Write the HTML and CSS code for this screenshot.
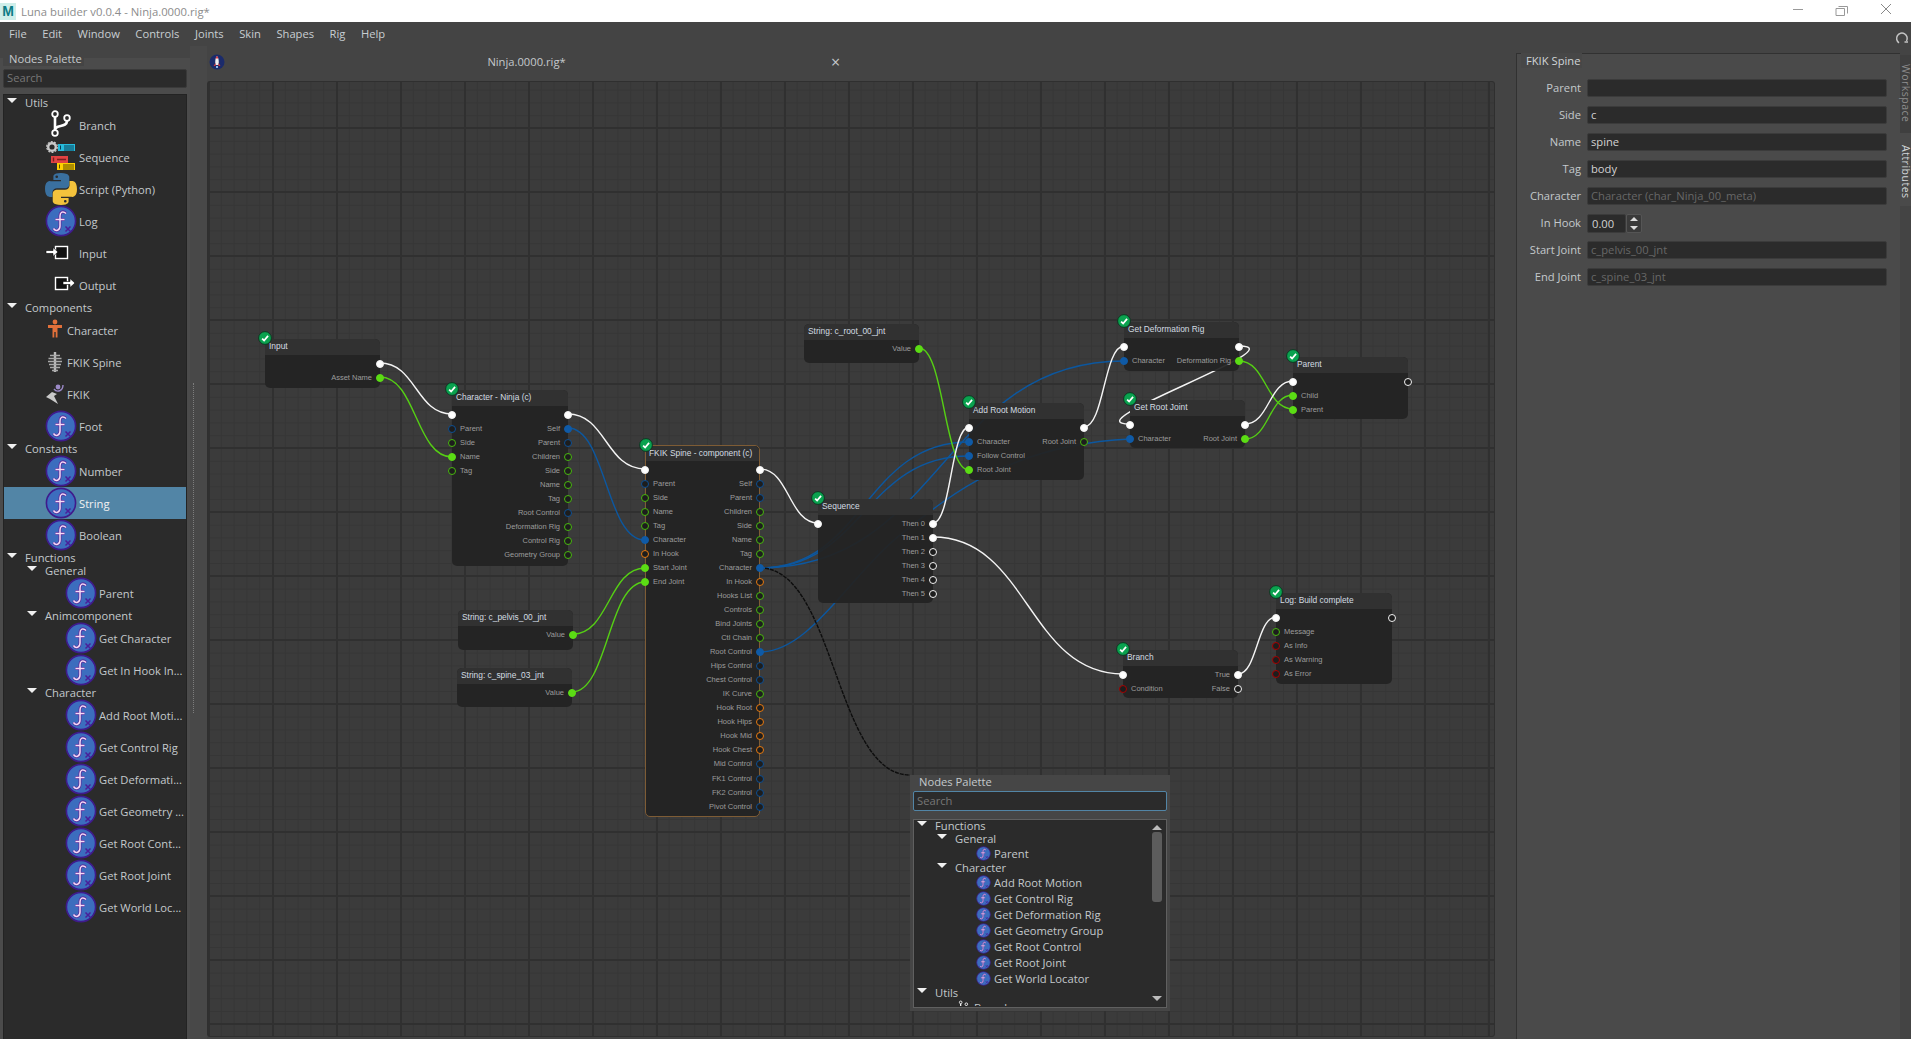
FILE: index.html
```html
<!DOCTYPE html>
<html>
<head>
    <title>Luna builder v0.0.4 - Ninja.0000.rig*</title>
    <meta charset="UTF-8">
    <link rel="stylesheet" href="styles.css">
</head>
<body>
<!-- icon sheet -->
<svg class="sheet" width="0" height="0">
    <symbol id="i-fn" viewBox="0 0 32 32">
        <circle cx="16" cy="16" r="14.6" fill="#3c6dbe" stroke="#3f1b8c" stroke-width="1.6"/>
        <path d="M21 8.5C18 5.5 15 7 15 11V21C15 26 10.500 26.500 8.500 23.500M10.500 14.500H19.500" fill="none" stroke="#5a2a9c" stroke-width="3"/>
        <path d="M21 8.500C18 5.500 15 7 15 11V21C15 26 10.500 26.500 8.500 23.500M10.500 14.500H19.500" fill="none" stroke="#f4dcf6" stroke-width="1.500"/>
        <path d="M20.500 21.500L25.500 26.500M25.500 21.500L20.500 26.500" stroke="#4a1f9a" stroke-width="1.500"/>
    </symbol>
    <symbol id="i-branch" viewBox="0 0 32 32">
        <g fill="none" stroke="#fff">
            <path d="M10 8V21M22 12C22 19 10 15 10 21" stroke-width="2.600"/>
            <circle cx="10" cy="5" r="2.800" stroke-width="1.800"/>
            <circle cx="22" cy="9" r="2.800" stroke-width="1.800"/>
            <circle cx="10" cy="24" r="2.800" stroke-width="1.800"/>
        </g>
    </symbol>
    <symbol id="i-seq" viewBox="0 0 32 32">
        <circle cx="7" cy="6" r="3.800" fill="none" stroke="#c9c9c9" stroke-width="2.400"/>
        <circle cx="7" cy="6" r="5.300" fill="none" stroke="#c9c9c9" stroke-width="1.200" stroke-dasharray="2 1.300"/>
        <rect x="13" y="3" width="17" height="7" fill="#26bcdc"/>
        <path d="M15.500 4.500V8.500M19 5H29M19 7H29M19 9H29" stroke="#0b3e57" stroke-width="1"/>
        <rect x="6" y="15" width="17" height="7" fill="#e14242"/>
        <path d="M8.500 16.500V20.500M12 18.500H21" stroke="#7c1f1f" stroke-width="1.400"/>
        <rect x="12" y="22" width="18" height="7" fill="#fed000"/>
        <path d="M14.500 23.500V27.500M18 24H29M18 26H29M18 28H29" stroke="#5a4a00" stroke-width="1"/>
    </symbol>
    <symbol id="i-python" viewBox="0 0 24 24">
        <path d="M11.900 0C6 0 6.300 2.600 6.300 2.600V5.300H12V6.100H4C4 6.100 0 5.600 0 11.900S3.500 18 3.500 18H5.600V15C5.600 15 5.500 11.500 9 11.500H15C15 11.500 18.200 11.500 18.200 8.400V3.200C18.200 3.200 18.700 0 11.900 0ZM8.800 1.800A1 1 0 1 1 8.800 3.800A1 1 0 1 1 8.800 1.800Z" fill="#3a709f" fill-rule="evenodd"/>
        <path d="M11.900 0C6 0 6.300 2.600 6.300 2.600V5.300H12V6.100H4C4 6.100 0 5.600 0 11.900S3.500 18 3.500 18H5.600V15C5.600 15 5.500 11.500 9 11.500H15C15 11.500 18.200 11.500 18.200 8.400V3.200C18.200 3.200 18.700 0 11.900 0ZM8.800 1.800A1 1 0 1 1 8.800 3.800A1 1 0 1 1 8.800 1.800Z" fill="#f3c23c" fill-rule="evenodd" transform="rotate(180 12 12)"/>
    </symbol>
    <symbol id="i-input" viewBox="0 0 32 32">
        <rect x="10.500" y="9.500" width="12" height="12" fill="#111" stroke="#fff" stroke-width="1.400"/>
        <path d="M1 13.500H8V10.500L13 15L8 19.500V16.500H1Z" fill="#fff" stroke="#000" stroke-width=".6"/>
    </symbol>
    <symbol id="i-output" viewBox="0 0 32 32">
        <rect x="10.500" y="8.500" width="12" height="12" fill="#111" stroke="#fff" stroke-width="1.400"/>
        <path d="M18 12.500H25V9.500L30 14L25 18.500V15.500H18Z" fill="#fff" stroke="#000" stroke-width=".6"/>
    </symbol>
    <symbol id="i-char" viewBox="0 0 20 32">
        <circle cx="10" cy="8" r="2.400" fill="#e2703a"/>
        <path d="M3 11H17V14H12.500V23.500H10.700V18H9.300V23.500H7.500V14H3Z" fill="#e2703a"/>
    </symbol>
    <symbol id="i-spine" viewBox="0 0 20 32">
        <path d="M10 6V26" stroke="#bdbdbd" stroke-width="2.400"/>
        <path d="M5 9.500H15M3.500 12.500H16.500M3 15.500H17M4 18.500H16M5 21.500H15M7 24.500H13" stroke="#a9a9a9" stroke-width="1.600"/>
    </symbol>
    <symbol id="i-fkik" viewBox="0 0 20 32">
        <path d="M1 19L7 14L12 16L9 18L13 26L5 21Z" fill="#c9c9c9"/>
        <circle cx="13" cy="9" r="2.400" fill="#9c8ac8"/>
        <path d="M9 11C12 15 18 13 18 7" fill="none" stroke="#9c8ac8" stroke-width="1.400"/>
    </symbol>
    <symbol id="i-check" viewBox="0 0 16 16">
        <circle cx="8" cy="8" r="7.300" fill="#0aa24f" stroke="#0b2f1d" stroke-width="1"/>
        <path d="M4.700 8.600L7 10.800L11.500 5.500" fill="none" stroke="#fff" stroke-width="2"/>
    </symbol>
</svg>

<div class="titlebar">
    <span class="app-logo">M</span>
    <span class="app-title">Luna builder v0.0.4 - Ninja.0000.rig*</span>
    <svg class="win-btns" width="111" height="22" viewBox="0 0 111 22">
        <path d="M0 9.500H10" stroke="#999" fill="none"/>
        <path d="M45.500 6.500H54.500V13.500M43 8.500H51.500V15.500H43Z" stroke="#999" fill="none"/>
        <path d="M88 4L98 14M98 4L88 14" stroke="#888" fill="none"/>
    </svg>
</div>

<div class="menubar">
    <span>File</span><span>Edit</span><span>Window</span><span>Controls</span><span>Joints</span><span>Skin</span><span>Shapes</span><span>Rig</span><span>Help</span>
    <svg class="refresh" width="14" height="14" viewBox="0 0 14 14"><path d="M11.500 10A5.300 5.300 0 1 0 4 11.800" fill="none" stroke="#c4c4c4" stroke-width="1.500"/><path d="M9.500 11H13" stroke="#c4c4c4" stroke-width="1.500"/></svg>
</div>

<div class="main">
    <div class="dock">
        <div class="group-title"><span>Nodes Palette</span></div>
        <div class="search">Search</div>
        <div class="tree">
            <div class="hdr l0"><i class="arrow"></i>Utils</div>
            <div class="item l0"><svg class="ico"><use href="#i-branch"/></svg>Branch</div>
            <div class="item l0"><svg class="ico"><use href="#i-seq"/></svg>Sequence</div>
            <div class="item l0"><svg class="ico"><use href="#i-python"/></svg>Script (Python)</div>
            <div class="item l0"><svg class="ico"><use href="#i-fn"/></svg>Log</div>
            <div class="item l0"><svg class="ico"><use href="#i-input"/></svg>Input</div>
            <div class="item l0"><svg class="ico"><use href="#i-output"/></svg>Output</div>
            <div class="hdr l0"><i class="arrow"></i>Components</div>
            <div class="item l0"><svg class="ico slim"><use href="#i-char"/></svg>Character</div>
            <div class="item l0"><svg class="ico slim"><use href="#i-spine"/></svg>FKIK Spine</div>
            <div class="item l0"><svg class="ico slim"><use href="#i-fkik"/></svg>FKIK</div>
            <div class="item l0"><svg class="ico"><use href="#i-fn"/></svg>Foot</div>
            <div class="hdr l0"><i class="arrow"></i>Constants</div>
            <div class="item l0"><svg class="ico"><use href="#i-fn"/></svg>Number</div>
            <div class="item l0 selected"><svg class="ico"><use href="#i-fn"/></svg>String</div>
            <div class="item l0"><svg class="ico"><use href="#i-fn"/></svg>Boolean</div>
            <div class="hdr l0"><i class="arrow"></i>Functions</div>
            <div class="hdr l1"><i class="arrow"></i>General</div>
            <div class="item l1"><svg class="ico"><use href="#i-fn"/></svg>Parent</div>
            <div class="hdr l1"><i class="arrow"></i>Animcomponent</div>
            <div class="item l1"><svg class="ico"><use href="#i-fn"/></svg>Get Character</div>
            <div class="item l1"><svg class="ico"><use href="#i-fn"/></svg>Get In Hook In...</div>
            <div class="hdr l1"><i class="arrow"></i>Character</div>
            <div class="item l1"><svg class="ico"><use href="#i-fn"/></svg>Add Root Moti...</div>
            <div class="item l1"><svg class="ico"><use href="#i-fn"/></svg>Get Control Rig</div>
            <div class="item l1"><svg class="ico"><use href="#i-fn"/></svg>Get Deformati...</div>
            <div class="item l1"><svg class="ico"><use href="#i-fn"/></svg>Get Geometry ...</div>
            <div class="item l1"><svg class="ico"><use href="#i-fn"/></svg>Get Root Cont...</div>
            <div class="item l1"><svg class="ico"><use href="#i-fn"/></svg>Get Root Joint</div>
            <div class="item l1"><svg class="ico"><use href="#i-fn"/></svg>Get World Loc...</div>
        </div>
    </div>

    <div class="splitter"><span></span></div>

    <div class="centre">
        <div class="tabbar">
            <svg class="rocket" width="16" height="16" viewBox="0 0 16 16">
                <circle cx="8" cy="8" r="7.500" fill="#1b2b6b"/>
                <path d="M8 2C10 4 10 8 9.500 11H6.500C6 8 6 4 8 2Z" fill="#eee"/>
                <path d="M8 2C8.800 2.800 9.200 3.600 9.400 4.500H6.600C6.800 3.600 7.200 2.800 8 2Z" fill="#d8343c"/>
                <path d="M6.500 9L4.500 12H6.500ZM9.500 9L11.500 12H9.500Z" fill="#d8343c"/>
                <rect x="7" y="12" width="2" height="2" fill="#8ab4e8"/>
            </svg>
            <span class="tab">Ninja.0000.rig*</span>
            <span class="tab-close">&#215;</span>
        </div>

        <div class="canvas">
            <svg class="wires" viewBox="207 81 1288 956">
                <g class="w-blue">
                    <path d="M568 428C606 428 606 540 645 540"/>
                    <path d="M760 568C864 568 864 442 969 442"/>
                    <path d="M760 568C864 568 864 456 969 456"/>
                    <path d="M760 568C942 568 942 361 1124 361"/>
                    <path d="M760 652C810 652 850 575 900 535S1010 445 1130 439"/>
                </g>
                <g class="w-green">
                    <path d="M380 377C416 377 416 457 452 457"/>
                    <path d="M573 634C609 634 609 568 645 568"/>
                    <path d="M572 692C608 692 608 582 645 582"/>
                    <path d="M919 348C944 348 944 470 969 470"/>
                    <path d="M1239 361C1266 361 1266 409 1293 409"/>
                    <path d="M1245 439C1269 439 1269 395 1293 395"/>
                </g>
                <g class="w-white">
                    <path d="M380 363C416 363 416 414 452 414"/>
                    <path d="M568 414C606 414 606 469 645 469"/>
                    <path d="M760 469C789 469 789 523 818 523"/>
                    <path d="M933 523C951 523 951 427 969 427"/>
                    <path d="M1084 427C1104 427 1104 346 1124 346"/>
                    <path d="M1239 346C1300 346 1069 424 1130 424"/>
                    <path d="M1245 424C1269 424 1269 381 1293 381"/>
                    <path d="M933 537C1028 537 1028 674 1123 674"/>
                    <path d="M1238 674C1257 674 1257 617 1276 617"/>
                </g>
                <path class="w-drag" d="M760 568C835 568 835 775 910 775"/>
            </svg>

            <div class="node n-input">
                <svg class="badge"><use href="#i-check"/></svg>
                <div class="node-title">Input</div>
                <div class="cols">
                    <div class="col"></div>
                    <div class="col right">
                        <div class="port"><i class="dot white fill"></i></div>
                        <div class="port"><i class="dot green fill"></i>Asset Name</div>
                    </div>
                </div>
            </div>

            <div class="node n-character">
                <svg class="badge"><use href="#i-check"/></svg>
                <div class="node-title">Character - Ninja (c)</div>
                <div class="cols">
                    <div class="col">
                        <div class="port"><i class="dot white fill"></i></div>
                        <div class="port"><i class="dot blue"></i>Parent</div>
                        <div class="port"><i class="dot green"></i>Side</div>
                        <div class="port"><i class="dot green fill"></i>Name</div>
                        <div class="port"><i class="dot green"></i>Tag</div>
                    </div>
                    <div class="col right">
                        <div class="port"><i class="dot white fill"></i></div>
                        <div class="port"><i class="dot blue fill"></i>Self</div>
                        <div class="port"><i class="dot blue"></i>Parent</div>
                        <div class="port"><i class="dot green"></i>Children</div>
                        <div class="port"><i class="dot green"></i>Side</div>
                        <div class="port"><i class="dot green"></i>Name</div>
                        <div class="port"><i class="dot green"></i>Tag</div>
                        <div class="port"><i class="dot blue"></i>Root Control</div>
                        <div class="port"><i class="dot green"></i>Deformation Rig</div>
                        <div class="port"><i class="dot green"></i>Control Rig</div>
                        <div class="port"><i class="dot green"></i>Geometry Group</div>
                    </div>
                </div>
            </div>

            <div class="node n-pelvis">
                <div class="node-title">String: c_pelvis_00_jnt</div>
                <div class="cols">
                    <div class="col"></div>
                    <div class="col right">
                        <div class="port"><i class="dot green fill"></i>Value</div>
                    </div>
                </div>
            </div>

            <div class="node n-spine">
                <div class="node-title">String: c_spine_03_jnt</div>
                <div class="cols">
                    <div class="col"></div>
                    <div class="col right">
                        <div class="port"><i class="dot green fill"></i>Value</div>
                    </div>
                </div>
            </div>

            <div class="node n-fkik">
                <svg class="badge"><use href="#i-check"/></svg>
                <div class="node-title">FKIK Spine - component (c)</div>
                <div class="cols">
                    <div class="col">
                        <div class="port"><i class="dot white fill"></i></div>
                        <div class="port"><i class="dot blue"></i>Parent</div>
                        <div class="port"><i class="dot green"></i>Side</div>
                        <div class="port"><i class="dot green"></i>Name</div>
                        <div class="port"><i class="dot green"></i>Tag</div>
                        <div class="port"><i class="dot blue fill"></i>Character</div>
                        <div class="port"><i class="dot orange"></i>In Hook</div>
                        <div class="port"><i class="dot green fill"></i>Start Joint</div>
                        <div class="port"><i class="dot green fill"></i>End Joint</div>
                    </div>
                    <div class="col right">
                        <div class="port"><i class="dot white fill"></i></div>
                        <div class="port"><i class="dot blue"></i>Self</div>
                        <div class="port"><i class="dot blue"></i>Parent</div>
                        <div class="port"><i class="dot green"></i>Children</div>
                        <div class="port"><i class="dot green"></i>Side</div>
                        <div class="port"><i class="dot green"></i>Name</div>
                        <div class="port"><i class="dot green"></i>Tag</div>
                        <div class="port"><i class="dot blue fill"></i>Character</div>
                        <div class="port"><i class="dot orange"></i>In Hook</div>
                        <div class="port"><i class="dot green"></i>Hooks List</div>
                        <div class="port"><i class="dot green"></i>Controls</div>
                        <div class="port"><i class="dot green"></i>Bind Joints</div>
                        <div class="port"><i class="dot green"></i>Ctl Chain</div>
                        <div class="port"><i class="dot blue fill"></i>Root Control</div>
                        <div class="port"><i class="dot blue"></i>Hips Control</div>
                        <div class="port"><i class="dot blue"></i>Chest Control</div>
                        <div class="port"><i class="dot green"></i>IK Curve</div>
                        <div class="port"><i class="dot orange"></i>Hook Root</div>
                        <div class="port"><i class="dot orange"></i>Hook Hips</div>
                        <div class="port"><i class="dot orange"></i>Hook Mid</div>
                        <div class="port"><i class="dot orange"></i>Hook Chest</div>
                        <div class="port"><i class="dot blue"></i>Mid Control</div>
                        <div class="port"><i class="dot blue"></i>FK1 Control</div>
                        <div class="port"><i class="dot blue"></i>FK2 Control</div>
                        <div class="port"><i class="dot blue"></i>Pivot Control</div>
                    </div>
                </div>
            </div>

            <div class="node n-sequence">
                <svg class="badge"><use href="#i-check"/></svg>
                <div class="node-title">Sequence</div>
                <div class="cols">
                    <div class="col">
                        <div class="port"><i class="dot white fill"></i></div>
                    </div>
                    <div class="col right">
                        <div class="port"><i class="dot white fill"></i>Then 0</div>
                        <div class="port"><i class="dot white fill"></i>Then 1</div>
                        <div class="port"><i class="dot white"></i>Then 2</div>
                        <div class="port"><i class="dot white"></i>Then 3</div>
                        <div class="port"><i class="dot white"></i>Then 4</div>
                        <div class="port"><i class="dot white"></i>Then 5</div>
                    </div>
                </div>
            </div>

            <div class="node n-root">
                <div class="node-title">String: c_root_00_jnt</div>
                <div class="cols">
                    <div class="col"></div>
                    <div class="col right">
                        <div class="port"><i class="dot green fill"></i>Value</div>
                    </div>
                </div>
            </div>

            <div class="node n-addroot">
                <svg class="badge"><use href="#i-check"/></svg>
                <div class="node-title">Add Root Motion</div>
                <div class="cols">
                    <div class="col">
                        <div class="port"><i class="dot white fill"></i></div>
                        <div class="port"><i class="dot blue fill"></i>Character</div>
                        <div class="port"><i class="dot blue fill"></i>Follow Control</div>
                        <div class="port"><i class="dot green fill"></i>Root Joint</div>
                    </div>
                    <div class="col right">
                        <div class="port"><i class="dot white fill"></i></div>
                        <div class="port"><i class="dot green"></i>Root Joint</div>
                    </div>
                </div>
            </div>

            <div class="node n-deform">
                <svg class="badge"><use href="#i-check"/></svg>
                <div class="node-title">Get Deformation Rig</div>
                <div class="cols">
                    <div class="col">
                        <div class="port"><i class="dot white fill"></i></div>
                        <div class="port"><i class="dot blue fill"></i>Character</div>
                    </div>
                    <div class="col right">
                        <div class="port"><i class="dot white fill"></i></div>
                        <div class="port"><i class="dot green fill"></i>Deformation Rig</div>
                    </div>
                </div>
            </div>

            <div class="node n-getroot">
                <svg class="badge"><use href="#i-check"/></svg>
                <div class="node-title">Get Root Joint</div>
                <div class="cols">
                    <div class="col">
                        <div class="port"><i class="dot white fill"></i></div>
                        <div class="port"><i class="dot blue fill"></i>Character</div>
                    </div>
                    <div class="col right">
                        <div class="port"><i class="dot white fill"></i></div>
                        <div class="port"><i class="dot green fill"></i>Root Joint</div>
                    </div>
                </div>
            </div>

            <div class="node n-parent">
                <svg class="badge"><use href="#i-check"/></svg>
                <div class="node-title">Parent</div>
                <div class="cols">
                    <div class="col">
                        <div class="port"><i class="dot white fill"></i></div>
                        <div class="port"><i class="dot green fill"></i>Child</div>
                        <div class="port"><i class="dot green fill"></i>Parent</div>
                    </div>
                    <div class="col right">
                        <div class="port"><i class="dot white"></i></div>
                    </div>
                </div>
            </div>

            <div class="node n-branch">
                <svg class="badge"><use href="#i-check"/></svg>
                <div class="node-title">Branch</div>
                <div class="cols">
                    <div class="col">
                        <div class="port"><i class="dot white fill"></i></div>
                        <div class="port"><i class="dot red"></i>Condition</div>
                    </div>
                    <div class="col right">
                        <div class="port"><i class="dot white fill"></i>True</div>
                        <div class="port"><i class="dot white"></i>False</div>
                    </div>
                </div>
            </div>

            <div class="node n-log">
                <svg class="badge"><use href="#i-check"/></svg>
                <div class="node-title">Log: Build complete</div>
                <div class="cols">
                    <div class="col">
                        <div class="port"><i class="dot white fill"></i></div>
                        <div class="port"><i class="dot green"></i>Message</div>
                        <div class="port"><i class="dot red"></i>As Info</div>
                        <div class="port"><i class="dot red"></i>As Warning</div>
                        <div class="port"><i class="dot red"></i>As Error</div>
                    </div>
                    <div class="col right">
                        <div class="port"><i class="dot white"></i></div>
                    </div>
                </div>
            </div>

            <!-- popup palette opened by dragging a wire -->
            <div class="popup">
                <div class="popup-title">Nodes Palette</div>
                <div class="search active">Search</div>
                <div class="popup-list">
                    <div class="tree small">
                        <div class="hdr l0"><i class="arrow"></i>Functions</div>
                        <div class="hdr l1"><i class="arrow"></i>General</div>
                        <div class="item l1"><svg class="ico"><use href="#i-fn"/></svg>Parent</div>
                        <div class="hdr l1"><i class="arrow"></i>Character</div>
                        <div class="item l1"><svg class="ico"><use href="#i-fn"/></svg>Add Root Motion</div>
                        <div class="item l1"><svg class="ico"><use href="#i-fn"/></svg>Get Control Rig</div>
                        <div class="item l1"><svg class="ico"><use href="#i-fn"/></svg>Get Deformation Rig</div>
                        <div class="item l1"><svg class="ico"><use href="#i-fn"/></svg>Get Geometry Group</div>
                        <div class="item l1"><svg class="ico"><use href="#i-fn"/></svg>Get Root Control</div>
                        <div class="item l1"><svg class="ico"><use href="#i-fn"/></svg>Get Root Joint</div>
                        <div class="item l1"><svg class="ico"><use href="#i-fn"/></svg>Get World Locator</div>
                        <div class="hdr l0"><i class="arrow"></i>Utils</div>
                        <div class="item l0b"><svg class="ico"><use href="#i-branch"/></svg>Branch</div>
                    </div>
                    <div class="scrollbar">
                        <i class="sb-up"></i>
                        <b class="sb-thumb"></b>
                        <i class="sb-down"></i>
                    </div>
                </div>
            </div>
        </div>
    </div>

    <div class="attrs">
        <div class="group-title"><span>FKIK Spine</span></div>
        <div class="form">
            <label>Parent</label><div class="field"></div>
            <label>Side</label><div class="field">c</div>
            <label>Name</label><div class="field">spine</div>
            <label>Tag</label><div class="field">body</div>
            <label>Character</label><div class="field off">Character (char_Ninja_00_meta)</div>
            <label>In Hook</label>
            <div class="spin">
                <div class="field">0.00</div>
                <div class="spin-btns"><i class="sb-up"></i><i class="sb-down"></i></div>
            </div>
            <label>Start Joint</label><div class="field off">c_pelvis_00_jnt</div>
            <label>End Joint</label><div class="field off">c_spine_03_jnt</div>
        </div>
    </div>

    <div class="side-tabs">
        <div class="side-tab">Workspace</div>
        <div class="side-tab on">Attributes</div>
    </div>
</div>
</body>
</html>
```

FILE: styles.css
```css
* {box-sizing: border-box;}

html, body {
    margin: 0;
    height: 100%;
}

body {
    display: flex;
    flex-direction: column;
    height: 100vh;
    overflow: hidden;
    background: #444;
    color: #c4c9cc;
    font-family: "Open Sans", "Noto Sans", sans-serif;
    font-size: 11.2px;
}

.sheet {position: absolute;}

/* Window title bar */
.titlebar {
    display: flex;
    align-items: center;
    height: 22px;
    flex: none;
    background: #fff;
}

.app-logo {
    width: 16px;
    height: 17px;
    background: #cfeeea;
    color: #0c7c86;
    font: bold 14px/17px "Liberation Sans", sans-serif;
    text-align: center;
}

.app-title {
    margin-left: 5px;
    color: #8c8c8c;
    font-size: 11.3px;
}

.win-btns {
    margin-left: auto;
    margin-right: 7px;
}

/* Menu */
.menubar {
    display: flex;
    align-items: center;
    height: 24px;
    flex: none;
    padding-left: 9px;
    padding-bottom: 2px;
    gap: 15.5px;
    color: #c8ced2;
}

.refresh {
    margin-left: auto;
    margin-right: 2px;
    margin-top: 10px;
}

.main {
    display: flex;
    flex: 1;
    min-height: 0;
}

/* Left dock */
.dock {
    display: flex;
    flex-direction: column;
    width: 190px;
    flex: none;
    margin-top: 12px;
    padding: 0 3px;
    background: #4b4b4b;
}

.group-title {
    height: 14px;
    margin-top: -6px;
    line-height: 14px;
}

.group-title span {
    padding: 0 2px 0 6px;
    background: #444;
}

.search {
    height: 19px;
    margin-top: 3px;
    padding-left: 3px;
    background: #2b2b2b;
    border: 1px solid #3a3a3a;
    border-radius: 2px;
    color: #777;
    line-height: 16px;
}

.tree {
    flex: 1;
    min-height: 0;
    overflow: hidden;
    margin-top: 6px;
    padding-top: 1px;
    background: #2b2b2b;
    border: 1px solid #232323;
    border-bottom: none;
}

.hdr {
    position: relative;
    height: 13px;
    line-height: 13px;
    white-space: nowrap;
}

.hdr.l0 {padding-left: 21px;}
.hdr.l1 {padding-left: 41px;}

.arrow {
    position: absolute;
    top: 2px;
    width: 0;
    height: 0;
    border-left: 5px solid transparent;
    border-right: 5px solid transparent;
    border-top: 5px solid #f0f0f0;
}

.hdr.l0 .arrow {left: 3px;}
.hdr.l1 .arrow {left: 23px;}

.item {
    display: flex;
    align-items: center;
    height: 32px;
    white-space: nowrap;
}

.item.l0 {padding-left: 41px;}
.item.l1 {padding-left: 61px;}

.ico {
    width: 32px;
    height: 32px;
    flex: none;
    margin-right: 2px;
}

.ico.slim {
    width: 20px;
    margin-right: 2px;
}

.selected {
    background: #5285a6;
    color: #f2f2f2;
}

/* Strip between dock and graph */
.splitter {
    width: 17px;
    flex: none;
    padding: 337px 0 0 3px;
    background: #484848;
}

.splitter span {
    display: block;
    height: 330px;
    border-left: 1px dotted #7c7c7c;
}

/* Graph */
.centre {
    display: flex;
    flex-direction: column;
    width: 1288px;
    flex: none;
    padding-bottom: 2px;
}

.tabbar {
    display: flex;
    align-items: center;
    height: 35px;
    flex: none;
    padding-left: 2px;
    padding-bottom: 4px;
}

.tab {
    width: 603px;
    text-align: center;
}

.tab-close {
    margin-left: 3px;
    font-size: 16px;
    line-height: 16px;
}

.canvas {
    position: relative;
    flex: 1;
    min-height: 0;
    border-radius: 3px;
    box-shadow: inset 0 0 0 1px #2f2f2f;
    background-color: #3b3b3b;
    background-image:
        linear-gradient(90deg, #303030 2px, transparent 2px),
        linear-gradient(#303030 2px, transparent 2px),
        linear-gradient(90deg, #363636 1px, transparent 1px),
        linear-gradient(#363636 1px, transparent 1px);
    background-size: 64px 64px, 64px 64px, 12.8px 12.8px, 12.8px 12.8px;
    background-position: 1px 46px, 1px 46px, 1px 47px, 1px 47px;
}

.wires {
    position: absolute;
    top: 0;
    left: 0;
    width: 100%;
    height: 100%;
    fill: none;
}

.w-white {stroke: #f4f4f4; stroke-width: 1.4;}
.w-green {stroke: #55cf14; stroke-width: 1.4;}
.w-blue {stroke: #0c579f; stroke-width: 1.4;}
.w-drag {stroke: #0d0d0d; stroke-width: 1.4; stroke-dasharray: 4 1;}

.node {
    position: absolute;
    width: 115px;
    border-radius: 5px;
    background: rgba(35, 35, 35, .94);
    font: 7.5px "Liberation Sans", sans-serif;
    color: #9c9c9c;
}

.node-title {
    height: 16px;
    padding-left: 4px;
    border-radius: 5px 5px 0 0;
    background: #313131;
    color: #d3dce2;
    font-size: 8.4px;
    line-height: 15px;
    white-space: nowrap;
}

.badge {
    position: absolute;
    top: -8px;
    left: -7px;
    width: 14px;
    height: 14px;
}

.cols {
    display: flex;
    justify-content: space-between;
    padding: 1.5px 8px 0;
}

.port {
    position: relative;
    height: 14.05px;
    line-height: 14px;
    white-space: nowrap;
}

.right .port {text-align: right;}

.dot {
    position: absolute;
    top: 3px;
    left: -12px;
    width: 8px;
    height: 8px;
    border: 1.5px solid;
    border-radius: 50%;
    background: #1d1d1d;
}

.right .dot {
    left: auto;
    right: -12px;
}

.dot.white {border-color: #f2f2f2;}
.dot.green {border-color: #48b80e;}
.dot.blue {border-color: #0d4f94;}
.dot.orange {border-color: #e87a10;}
.dot.red {border-color: #a80000;}

.dot.white.fill {background: #fff;}
.dot.green.fill {background: #5bdc14; border-color: #5bdc14;}
.dot.blue.fill {background: #0f5aa6; border-color: #0f5aa6;}

.n-input {left: 58px; top: 258px; height: 49px;}
.n-character {left: 245px; top: 309px; width: 116px; height: 176px;}
.n-pelvis {left: 251px; top: 529px; height: 40px;}
.n-spine {left: 250px; top: 587px; height: 39px;}
.n-fkik {left: 438px; top: 364px; height: 372px; border: 1px solid #7e5c35; border-top-left-radius: 0;}
.n-sequence {left: 611px; top: 418px; height: 104px;}
.n-root {left: 597px; top: 243px; height: 39px;}
.n-addroot {left: 762px; top: 322px; height: 77px;}
.n-deform {left: 917px; top: 241px; height: 49px;}
.n-getroot {left: 923px; top: 319px; height: 48px;}
.n-parent {left: 1086px; top: 276px; height: 62px;}
.n-branch {left: 916px; top: 569px; height: 48px;}
.n-log {left: 1069px; top: 512px; width: 116px; height: 91px;}

.n-fkik .cols {padding-left: 7px; padding-right: 7px;}
.n-fkik .node-title {padding-left: 3px; height: 15px;}

/* Popup palette */
.popup {
    position: absolute;
    left: 703px;
    top: 694px;
    display: flex;
    flex-direction: column;
    width: 260px;
    height: 236px;
    padding: 0 3px 3px;
    background: #464646;
}

.popup-title {
    height: 16px;
    padding-left: 6px;
    line-height: 14px;
}

.search.active {
    height: 20px;
    margin-top: 0;
    border: 1px solid #5285a6;
    line-height: 18px;
}

.popup-list {
    display: flex;
    flex: 1;
    min-height: 0;
    margin-top: 8px;
    background: #2b2b2b;
    border: 1px solid #606060;
    outline: 1px solid #2a2a2a;
    outline-offset: -2px;
}

.tree.small {
    margin: -1px 0 0;
    padding-top: 0;
    border: none;
    background: none;
}

.small .hdr.l0 {padding-left: 21px;}
.small .item {height: 16px;}
.small .item.l1 {padding-left: 62px;}
.small .item.l0b {padding-left: 42px;}
.small .ico {width: 15px; height: 15px; margin-right: 3px;}

.scrollbar {
    display: flex;
    flex-direction: column;
    align-items: center;
    width: 14px;
    flex: none;
    margin-right: 2px;
    padding-top: 5px;
}

.sb-up, .sb-down {
    width: 0;
    height: 0;
    border-left: 5px solid transparent;
    border-right: 5px solid transparent;
}

.sb-up {border-bottom: 5px solid #bbb;}
.sb-down {border-top: 5px solid #bbb;}

.sb-thumb {
    width: 10px;
    height: 70px;
    margin-top: 2px;
    margin-bottom: auto;
    border-radius: 3px;
    background: #5c5c5c;
}

.scrollbar .sb-down {margin-bottom: 6px;}

/* Attribute panel */
.attrs {
    width: 384px;
    flex: none;
    margin-top: 7px;
    margin-left: 21px;
    border-left: 1px solid #313131;
    border-top: 1px solid #313131;
    background: #4a4a4a;
}

.attrs .group-title {
    margin-top: 0;
    height: 17px;
    padding-left: 4px;
}

.attrs .group-title span {
    padding: 0 2px 0 5px;
    background: #474747;
    color: #d0d5d8;
}

.form {
    display: grid;
    grid-template-columns: 64px 300px;
    grid-auto-rows: 18px;
    column-gap: 6px;
    row-gap: 9px;
    margin-top: 8px;
}

.form label {
    text-align: right;
    line-height: 18px;
    white-space: nowrap;
}

.field {
    height: 18px;
    padding-left: 3px;
    background: #2b2b2b;
    border: 1px solid #3b3b3b;
    border-radius: 2px;
    color: #d2d2d2;
    line-height: 16px;
}

.field.off {color: #676767;}

.spin {
    display: flex;
    height: 19px;
}

.spin .field {
    width: 39px;
    height: 19px;
    padding-left: 4px;
    line-height: 18px;
}

.spin-btns {
    display: flex;
    flex-direction: column;
    align-items: center;
    justify-content: space-around;
    width: 16px;
    background: #3a3a3a;
    border: 1px solid #555;
    border-radius: 2px;
}

.spin-btns i {border-left-width: 4px; border-right-width: 4px;}
.spin-btns .sb-up {border-bottom: 4px solid #ddd;}
.spin-btns .sb-down {border-top: 4px solid #ddd;}

/* Right vertical tabs */
.side-tabs {
    width: 11px;
    flex: none;
    margin-top: 9px;
}

.side-tab {
    height: 78px;
    padding-top: 9px;
    background: #3f3f3f;
    color: #8d8d8d;
    font-size: 10.5px;
    letter-spacing: .5px;
    line-height: 11px;
    writing-mode: vertical-rl;
    white-space: nowrap;
}

.side-tab.on {
    height: 73px;
    padding-top: 12px;
    background: #4a4a4a;
    color: #d4d8da;
}
```
